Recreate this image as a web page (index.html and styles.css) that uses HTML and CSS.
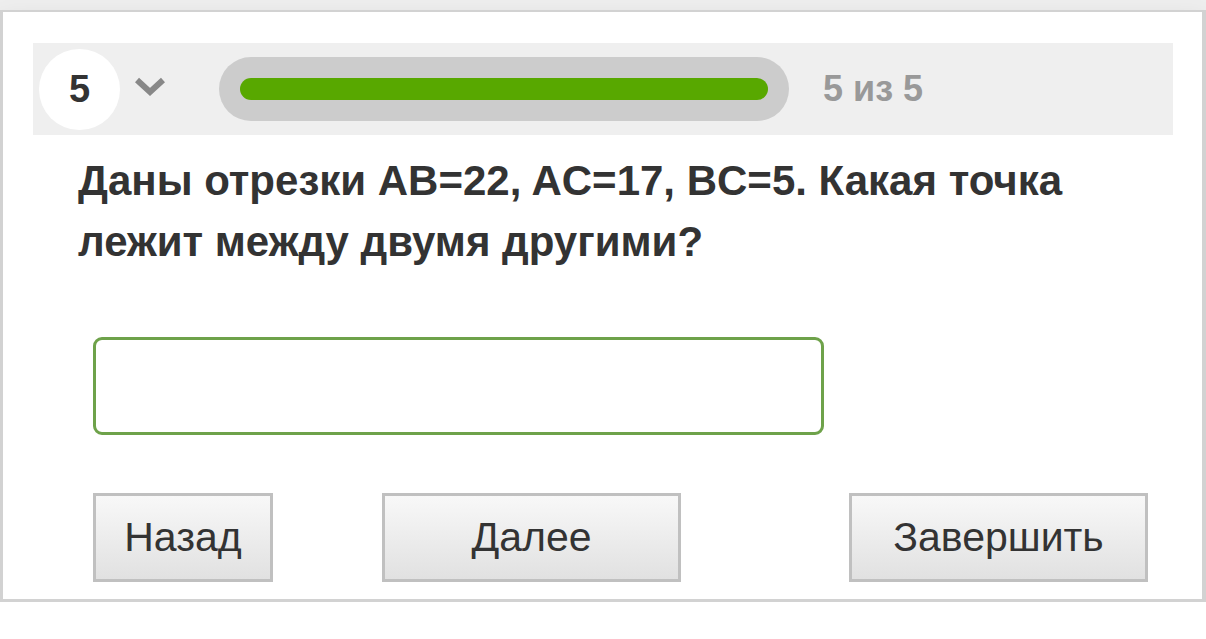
FILE: index.html
```html
<!DOCTYPE html>
<html lang="ru">
<head>
    <meta charset="UTF-8">
    <meta name="viewport" content="width=device-width, initial-scale=1.0">
    <title>Тест</title>
    <link rel="stylesheet" href="styles.css">
</head>
<body>
    <!-- Полоса сверху -->
    <div class="top-strip"></div>

    <!-- Карточка вопроса -->
    <div class="card">
        <div class="progress-bar">
            <div class="num">5</div>
            <svg class="chevron" width="30" height="20" viewBox="0 0 30 20">
                <polyline points="2,3 15,15 28,3" fill="none" stroke="#888" stroke-width="6"/>
            </svg>
            <div class="track">
                <div class="fill" style="width: 100%"></div>
            </div>
            <div class="counter">5 из 5</div>
        </div>

        <div class="question">Даны отрезки AB=22, AC=17, BC=5. Какая точка лежит между двумя другими?</div>

        <input type="text" class="answer">

        <div class="buttons">
            <button class="btn btn-back">Назад</button>
            <button class="btn btn-next">Далее</button>
            <button class="btn btn-finish">Завершить</button>
        </div>
    </div>
</body>
</html>
```

FILE: styles.css
```css
/* Глобальные стили */
body {
    margin: 0;
    font-family: "Liberation Sans", Arial, sans-serif;
    background-color: #fff;
    color: #333;
}
.top-strip {
    height: 10px;
    background-color: #eeeeee;
}
.card {
    background-color: #fff;
    border: 3px solid #d2d2d2;
    border-top-width: 2px;
    border-right-width: 4px;
    padding: 31px 29px 17px 30px;
    box-shadow: 0 14px 26px rgba(0, 0, 0, 0.14);
}
/* Шкала прогресса */
.progress-bar {
    display: flex;
    align-items: center;
    height: 92px;
    background-color: #efefef;
    padding-left: 6px;
}
.num {
    width: 81px;
    height: 81px;
    border-radius: 50%;
    background-color: #fff;
    display: flex;
    align-items: center;
    justify-content: center;
    font-weight: bold;
    font-size: 38px;
    color: #333;
}
.chevron {
    margin-left: 15px;
    margin-top: -5px;
}
.track {
    margin-left: 54px;
    width: 528px;
    padding: 21px;
    background-color: #cccccc;
    border-radius: 32px;
}
.fill {
    height: 22px;
    border-radius: 11px;
    background-color: #58a800;
}
.counter {
    margin-left: 34px;
    font-weight: bold;
    font-size: 36px;
    color: #999;
}
/* Вопрос */
.question {
    margin: 15px 50px 0 45px;
    font-weight: bold;
    font-size: 42px;
    line-height: 61px;
    color: #333;
}
.answer {
    display: block;
    box-sizing: border-box;
    margin: 65px 0 0 60px;
    width: 731px;
    height: 98px;
    border: 3px solid #6ea24a;
    border-radius: 9px;
    outline: none;
    font-size: 36px;
    padding: 0 16px;
}
/* Кнопки */
.buttons {
    display: flex;
    margin: 58px 0 0 60px;
}
.btn {
    box-sizing: border-box;
    height: 89px;
    border: 3px solid #c0c0c0;
    background: linear-gradient(#f8f8f8, #e1e1e1);
    font-family: "Liberation Sans", Arial, sans-serif;
    font-size: 41px;
    color: #333;
    border-radius: 0;
    padding: 0;
}
.btn-back {
    width: 180px;
}
.btn-next {
    width: 299px;
    margin-left: 109px;
}
.btn-finish {
    width: 299px;
    margin-left: 168px;
}
```
